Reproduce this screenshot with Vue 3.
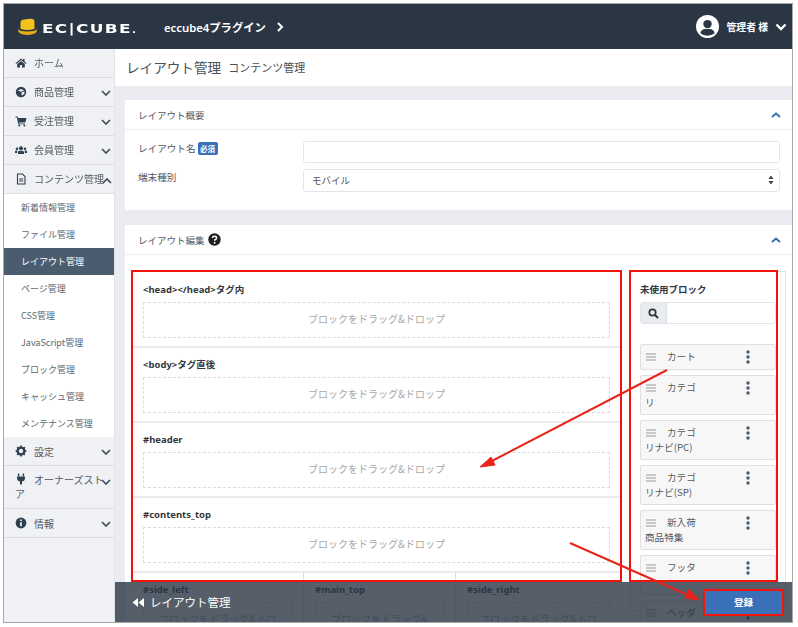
<script setup>
const menuTop = [
  { label: 'ホーム', icon: 'home' },
  { label: '商品管理', icon: 'cube', chev: true },
  { label: '受注管理', icon: 'cart', chev: true },
  { label: '会員管理', icon: 'users', chev: true },
]
const subMenu = ['新着情報管理', 'ファイル管理', 'レイアウト管理', 'ページ管理', 'CSS管理', 'JavaScript管理', 'ブロック管理', 'キャッシュ管理', 'メンテナンス管理']
const sections = ['<head></head>タグ内', '<body>タグ直後', '#header', '#contents_top']
const cols = [
  { t: '#side_left', w: 172 },
  { t: '#main_top', w: 152 },
  { t: '#side_right', w: 165 },
]
const blocks = [
  { a: 'カート', h: 26 },
  { a: 'カテゴ', b: 'リ', h: 40 },
  { a: 'カテゴ', b: 'リナビ(PC)', h: 40 },
  { a: 'カテゴ', b: 'リナビ(SP)', h: 40 },
  { a: '新入荷', b: '商品特集', h: 40 },
  { a: 'フッタ', h: 40 },
  { a: 'ヘッダ', h: 40 },
]
</script>

<template>
  <div class="page">
    <div class="frame">
      <header class="top">
        <svg class="hat" width="21" height="18" viewBox="0 0 24 20">
          <path d="M4 12 V5 Q4 2 8 1.5 L15 0.5 Q20 0 20 4 V12 Q12 15 4 12Z" fill="#f4c21c" />
          <path d="M1 12.5 Q4 15 12 15 Q20 15 23 12.5 Q23 19 12 19 Q1 19 1 12.5Z" fill="#e5ad12" />
        </svg>
        <span class="logo-box"><span class="logo">EC|CUBE<small>.</small></span></span>
        <span class="shop">eccube4プラグイン</span>
        <svg class="shop-chev" width="8" height="10" viewBox="0 0 8 10"><path d="M2 1 L6 5 L2 9" fill="none" stroke="#fff" stroke-width="2" /></svg>
        <span class="spacer"></span>
        <svg width="23" height="23" viewBox="0 0 24 24">
          <circle cx="12" cy="12" r="12" fill="#fff" />
          <circle cx="12" cy="9.5" r="4.4" fill="#2a3644" />
          <path d="M4.5 19 Q6 14.6 9.5 14.6 H14.5 Q18 14.6 19.5 19 Q16.5 21.6 12 21.6 Q7.5 21.6 4.5 19Z" fill="#2a3644" />
        </svg>
        <span class="user">管理者 様</span>
        <svg width="12" height="8" viewBox="0 0 12 8"><path d="M1.5 1.5 L6 6 L10.5 1.5" fill="none" stroke="#fff" stroke-width="2.4" /></svg>
      </header>

      <div class="body">
        <aside class="side">
          <div v-for="m in menuTop" :key="m.label" class="mi up">
            <svg class="mic" width="12" height="12" viewBox="0 0 12 12">
              <g v-if="m.icon === 'home'" fill="#2f4050"><path d="M6 1.5 L0.5 6.2 L1.2 7 L6 3 L10.8 7 L11.5 6.2 L9.5 4.5 V2 H8 V3.2Z" /><path d="M2.2 7 L6 3.9 L9.8 7 V10.5 H7 V8 H5 V10.5 H2.2Z" /></g>
              <g v-else-if="m.icon === 'cube'"><circle cx="6" cy="6" r="5.2" fill="#2f4050" /><path d="M2.8 4.4 L6 3 L9.2 4.4 L6 5.8Z M6.5 6.6 L9.4 5.4 V8 L6.5 9.4Z" fill="#f0f1f5" /></g>
              <g v-else-if="m.icon === 'cart'" fill="#2f4050"><path d="M0.5 1.5 H2.6 L3 3 H11.5 L10.4 7.5 H4 L4.2 8.4 H10 V9.3 H3.3 L1.9 2.4 H0.5Z" /><circle cx="4.3" cy="10.5" r="1" /><circle cx="9.4" cy="10.5" r="1" /></g>
              <g v-else fill="#2f4050"><circle cx="6" cy="4.2" r="2" /><circle cx="2" cy="4.8" r="1.3" /><circle cx="10" cy="4.8" r="1.3" /><path d="M3 10 V8.2 Q3 6.7 4.5 6.7 H7.5 Q9 6.7 9 8.2 V10Z M0 9 V7.6 Q0 6.5 1.2 6.5 H2.6 Q2.2 7.2 2.2 8 V9Z M12 9 V7.6 Q12 6.5 10.8 6.5 H9.4 Q9.8 7.2 9.8 8 V9Z" /></g>
            </svg>
            <span class="ml">{{ m.label }}</span>
            <svg v-if="m.chev" class="chev" width="10" height="6" viewBox="0 0 10 6"><path d="M1 1 L5 5 L9 1" fill="none" stroke="#3c4a58" stroke-width="1.6" /></svg>
          </div>
          <div class="mi up">
            <svg class="mic" width="12" height="12" viewBox="0 0 12 12"><path d="M2.5 1 H7.5 L10 3.5 V11 H2.5Z M4.2 6 H8.2 M4.2 8 H8.2" fill="none" stroke="#2f4050" stroke-width="1.1" /></svg>
            <span class="ml">コンテンツ管理</span>
            <svg class="chev tight" width="10" height="6" viewBox="0 0 10 6"><path d="M1 5 L5 1 L9 5" fill="none" stroke="#3c4a58" stroke-width="1.6" /></svg>
          </div>
          <ul class="sub">
            <li v-for="s in subMenu" :key="s" :class="{ on: s === 'レイアウト管理' }">{{ s }}</li>
          </ul>
          <div class="mi">
            <svg class="mic" width="12" height="12" viewBox="0 0 12 12"><circle cx="6" cy="6" r="3.4" fill="none" stroke="#2f4050" stroke-width="2.4" /><path d="M6 .6 V2.6 M6 9.4 V11.4 M.6 6 H2.6 M9.4 6 H11.4 M2.2 2.2 L3.6 3.6 M8.4 8.4 L9.8 9.8 M9.8 2.2 L8.4 3.6 M3.6 8.4 L2.2 9.8" stroke="#2f4050" stroke-width="1.7" /></svg>
            <span class="ml">設定</span>
            <svg class="chev" width="10" height="6" viewBox="0 0 10 6"><path d="M1 1 L5 5 L9 1" fill="none" stroke="#3c4a58" stroke-width="1.6" /></svg>
          </div>
          <div class="mi tall">
            <svg class="mic" width="12" height="12" viewBox="0 0 12 12"><path d="M3.6 .5 V3.5 M8.4 .5 V3.5" stroke="#2f4050" stroke-width="1.4" /><path d="M2 3.5 H10 V5 Q10 8 7 8.5 V11.5 H5 V8.5 Q2 8 2 5Z" fill="#2f4050" /></svg>
            <span class="ml">オーナーズストア</span>
            <svg class="chev high" width="10" height="6" viewBox="0 0 10 6"><path d="M1 1 L5 5 L9 1" fill="none" stroke="#3c4a58" stroke-width="1.6" /></svg>
          </div>
          <div class="mi">
            <svg class="mic" width="12" height="12" viewBox="0 0 12 12"><circle cx="6" cy="6" r="5.4" fill="#2f4050" /><path d="M6 2.6 V4 M6 5.2 V9.2" stroke="#fff" stroke-width="1.6" /></svg>
            <span class="ml">情報</span>
            <svg class="chev" width="10" height="6" viewBox="0 0 10 6"><path d="M1 1 L5 5 L9 1" fill="none" stroke="#3c4a58" stroke-width="1.6" /></svg>
          </div>
        </aside>

        <main class="main">
          <div class="title-bar">
            <h1>レイアウト管理</h1>
            <span>コンテンツ管理</span>
          </div>
          <div class="content">
            <section class="card first">
              <div class="card-h">
                <span>レイアウト概要</span>
                <svg width="10" height="6" viewBox="0 0 10 6"><path d="M1 5 L5 1.5 L9 5" fill="none" stroke="#3a70b8" stroke-width="2" /></svg>
              </div>
              <div class="form">
                <div class="row">
                  <label>レイアウト名<em>必須</em></label>
                  <div class="field"></div>
                </div>
                <div class="row">
                  <label>端末種別</label>
                  <div class="field sel">
                    モバイル
                    <svg width="6" height="10" viewBox="0 0 6 10"><path d="M3 0.5 L5.6 4 H0.4Z M3 9.5 L0.4 6 H5.6Z" fill="#444" /></svg>
                  </div>
                </div>
              </div>
            </section>

            <section class="card">
              <div class="card-h">
                <span class="with-help">レイアウト編集
                  <svg width="13" height="13" viewBox="0 0 13 13"><circle cx="6.5" cy="6.5" r="6.2" fill="#1f1f1f" /><path d="M4.4 5 Q4.6 3.2 6.5 3.2 Q8.6 3.2 8.6 4.9 Q8.6 6 7.4 6.5 Q6.6 6.9 6.6 7.8" fill="none" stroke="#fff" stroke-width="1.5" /><circle cx="6.6" cy="9.7" r="0.95" fill="#fff" /></svg>
                </span>
                <svg width="10" height="6" viewBox="0 0 10 6"><path d="M1 5 L5 1.5 L9 5" fill="none" stroke="#3a70b8" stroke-width="2" /></svg>
              </div>
              <div class="editor">
                <div class="left">
                  <div v-for="s in sections" :key="s" class="sec">
                    <h3>{{ s }}</h3>
                    <div class="drop">ブロックをドラッグ&amp;ドロップ</div>
                  </div>
                  <div class="three">
                    <div v-for="c in cols" :key="c.t" class="sec col" :style="{ width: c.w + 'px' }">
                      <h3>{{ c.t }}</h3>
                      <div class="drop">ブロックをドラッグ&amp;ドロップ</div>
                    </div>
                  </div>
                </div>
                <div class="right">
                  <h3>未使用ブロック</h3>
                  <div class="search">
                    <span class="prep">
                      <svg width="11" height="11" viewBox="0 0 11 11"><circle cx="4.5" cy="4.5" r="3.2" fill="none" stroke="#333" stroke-width="1.7" /><path d="M7 7 L10 10" stroke="#333" stroke-width="2" /></svg>
                    </span>
                  </div>
                  <div class="blocks">
                    <div v-for="b in blocks" :key="b.a" class="block" :style="{ height: b.h + 'px' }">
                      <div class="line1">
                        <svg class="grip" width="10" height="8" viewBox="0 0 10 8"><path d="M0 1 H10 M0 4 H10 M0 7 H10" stroke="#9a9a9a" stroke-width="1.2" /></svg>
                        <span>{{ b.a }}</span>
                      </div>
                      <div v-if="b.b" class="line2">{{ b.b }}</div>
                      <svg class="kebab" width="4" height="14" viewBox="0 0 4 14"><circle cx="2" cy="2" r="1.7" /><circle cx="2" cy="7" r="1.7" /><circle cx="2" cy="12" r="1.7" /></svg>
                    </div>
                  </div>
                </div>
              </div>
            </section>
          </div>

          <div class="bar">
            <svg width="12" height="9" viewBox="0 0 12 9"><path d="M6 0 V9 L0.5 4.5Z M12 0 V9 L6.5 4.5Z" fill="#fff" /></svg>
            <span>レイアウト管理</span>
            <button type="button">登録</button>
          </div>
        </main>
      </div>
    </div>

    <svg class="marks" width="798" height="627" viewBox="0 0 798 627">
      <g fill="none" stroke="#f0140c" stroke-width="2">
        <rect x="132" y="271" width="489" height="310" />
        <rect x="630" y="271" width="147" height="310" />
        <rect x="704" y="590" width="79" height="25" />
      </g>
      <g fill="#e8231a" stroke="#e8231a">
        <path d="M667 370 L488 463" stroke-width="2" />
        <path d="M480 467 L491 457 L495 465Z" />
        <path d="M570 543 L690 596" stroke-width="2" />
        <path d="M699 600 L685 598 L689 589Z" />
      </g>
    </svg>
  </div>
</template>

<style scoped>
.page { position: relative; width: 798px; height: 627px; background: #fff; overflow: hidden; font-family: "Noto Sans CJK JP", "Noto Sans", sans-serif; color: #444; }
.frame { margin: 3px 0 0 3px; width: 788px; height: 618px; border: 1px solid #a8a8a8; overflow: hidden; display: flex; flex-direction: column; filter: blur(0.4px); }
.top { height: 45px; flex: none; background: #2a3644; color: #fff; display: flex; align-items: center; padding: 0 5px 0 13px; }
.hat { margin-right: 4px; margin-top: 1px; flex: none; }
.logo-box { width: 122px; flex: none; margin-top: -2px; }
.logo { display: inline-block; font-family: "DejaVu Sans", sans-serif; font-weight: 700; font-size: 13px; letter-spacing: 1px; white-space: nowrap; transform: scaleX(1.3); transform-origin: left center; }
.logo small { font-size: 9px; }
.shop { font-size: 11.3px; font-weight: 600; font-family: "Noto Sans", "Noto Sans CJK JP", sans-serif; white-space: nowrap; }
.shop-chev { margin-left: 10px; }
.spacer { flex: 1; }
.user { font-size: 9.8px; font-weight: 700; margin: 0 7px 0 8px; }
.body { flex: 1; display: flex; min-height: 0; }
.side { width: 110px; flex: none; background: #f0f1f5; border-right: 1px solid #e2e3e8; box-sizing: content-box; }
.mi { height: 28px; border-bottom: 1px solid #dddee3; display: flex; align-items: center; padding-left: 11px; font-size: 10px; position: relative; }
.mi.up { padding-bottom: 0; }
.mi.up .ml { margin-top: -2px; }
.mic { flex: none; margin-right: 7px; }
.ml { white-space: nowrap; color: #54595f; }
.chev { position: absolute; right: 3px; top: 12px; }
.chev.tight { right: 2px; top: 13px; }
.chev.high { top: 13px; }
.mi.tall { height: 35px; align-items: flex-start; padding-top: 7px; }
.mi.tall .ml { position: absolute; left: 11px; top: 7px; width: 92px; white-space: normal; word-break: break-all; line-height: 14px; text-indent: 19px; }
.sub { list-style: none; margin: 0; padding: 0; height: 243px; background: #fff; }
.sub li { height: 27px; line-height: 27px; padding-left: 17px; font-size: 9px; color: #5c6670; }
.sub li.on { background: #4b5c6f; color: #fff; }
.main { flex: 1; min-width: 0; background: #ebecf2; position: relative; overflow: hidden; }
.title-bar { height: 35px; padding: 0 0 2px 11px; background: #fff; display: flex; align-items: center; gap: 7px; }
h1 { margin: 0; font-size: 13.6px; font-weight: 400; color: #4a4f55; }
.title-bar span { font-size: 11px; color: #4a4f55; }
.content { padding: 14px 0 0 10px; }
.card { background: #fff; width: 667px; }
.card.first { height: 110px; margin-bottom: 15px; }
.card-h { height: 29px; display: flex; align-items: center; justify-content: space-between; padding: 0 11px 0 13px; border-bottom: 1px solid #eeeff3; font-size: 9.5px; color: #54595f; }
.with-help { display: flex; align-items: center; gap: 3px; }
.form { padding: 11px 12px 0 13px; }
.row { display: flex; margin-bottom: 6px; }
.row label { width: 165px; font-size: 9.6px; color: #54595f; padding-top: 1px; }
.row:nth-child(1) label { padding-top: 0; line-height: 15px; }
em { font-style: normal; font-weight: 700; background: #3a70b8; color: #fff; font-size: 7.5px; padding: 1px 2.5px; border-radius: 2px; margin-left: 2px; }
.field { flex: 1; height: 22px; border: 1px solid #e2e6ec; border-radius: 3px; box-sizing: border-box; }
.sel { height: 23px; font-size: 9.5px; padding: 0 5px 1px 8px; display: flex; align-items: center; justify-content: space-between; color: #555; }
.editor { display: flex; padding: 16px 0 0 7px; gap: 9px; align-items: flex-start; }
.left { width: 489px; flex: none; margin-top: 2px; }
h3 { margin: 0; font-size: 9.5px; font-weight: 700; line-height: 14px; color: #33383d; font-family: "Noto Sans", "Noto Sans CJK JP", sans-serif; }
.sec { padding: 10px 11px 0; height: 75px; box-sizing: border-box; border-bottom: 2px solid #ebebeb; }
.drop { margin-top: 5px; height: 36px; border: 1px dashed #dcdcdc; box-sizing: border-box; padding: 9px 12px 0; text-align: center; line-height: 14px; font-size: 10px; color: #a8a8a8; overflow: hidden; }
.three { display: flex; }
.col { height: 90px; border-bottom: 0; border-right: 1px solid #dedede; flex: none; }
.col:last-child { border-right: 0; }
.right { width: 156px; height: 340px; flex: none; border: 1px solid #e2e2e2; box-sizing: border-box; padding: 11px 10px 0 9px; }
.search { margin-top: 5px; height: 22px; border: 1px solid #e2e6ec; border-radius: 3px; box-sizing: border-box; display: flex; width: 136px; }
.prep { width: 25px; background: #e9ecef; border-right: 1px solid #dde0e4; display: flex; align-items: center; justify-content: center; }
.blocks { margin-top: 20px; display: flex; flex-direction: column; gap: 5px; width: 136px; }
.block { border: 1px solid #e0e0e0; background: #f7f7f7; box-sizing: border-box; border-radius: 2px; padding: 4px 4px; font-size: 9.6px; color: #54595f; position: relative; flex: none; line-height: 15px; }
.line1 { display: flex; align-items: center; }
.grip { margin-right: 11px; margin-left: 1px; flex: none; }
.kebab { position: absolute; left: 105px; top: 5px; fill: #4a5c70; }
.bar { position: absolute; left: 0; right: 0; bottom: 0; height: 40px; background: rgba(42, 54, 68, 0.8); color: #fff; display: flex; align-items: center; padding-left: 17px; font-size: 11.5px; }
.bar span { margin-left: 6px; }
.bar button { position: absolute; left: 590px; top: 8px; width: 77px; height: 24px; background: #3a70b8; color: #fff; border: 0; font: inherit; font-size: 9.5px; font-weight: 700; padding: 0; }
.marks { position: absolute; left: 0; top: 0; filter: blur(0.3px); pointer-events: none; }
</style>

<style>
html, body { margin: 0; background: #fff; }
</style>
